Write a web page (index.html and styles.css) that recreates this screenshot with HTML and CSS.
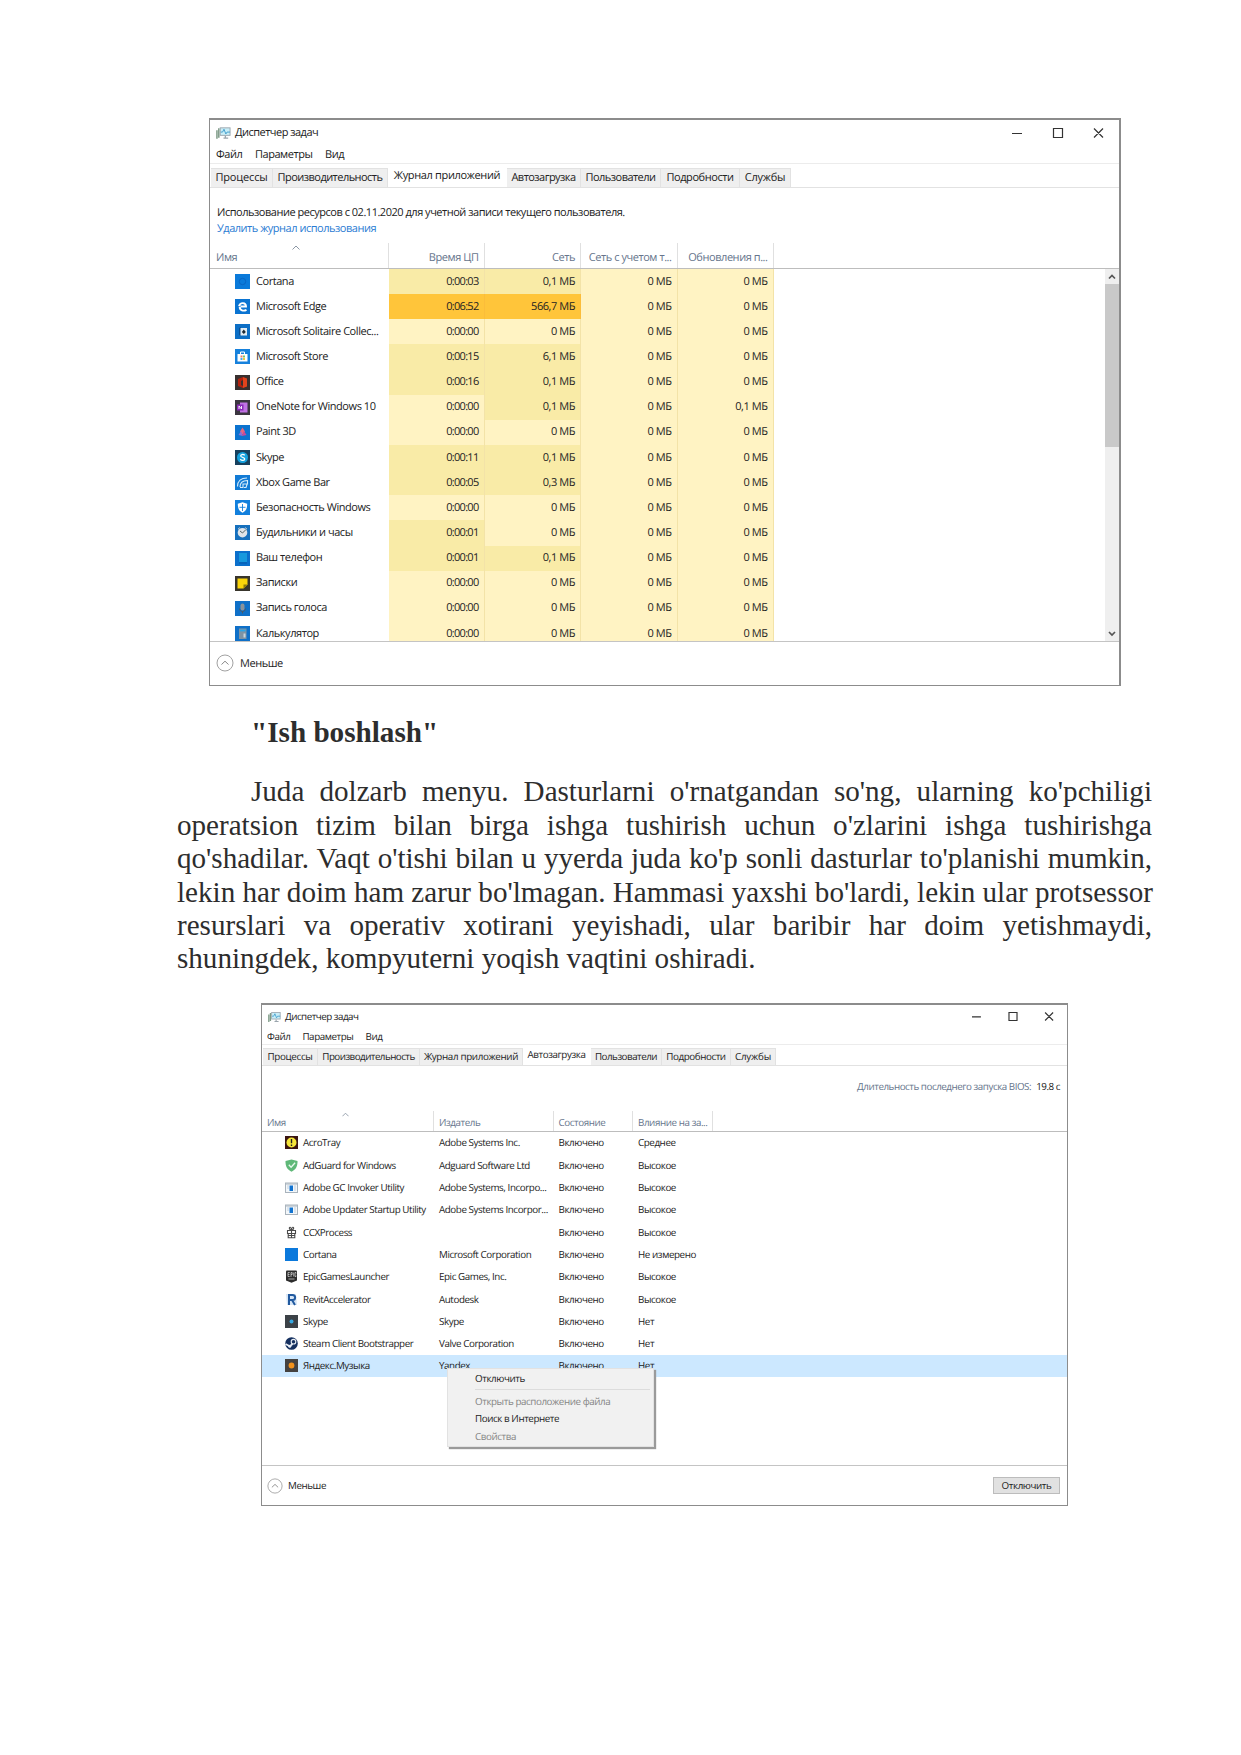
FILE: index.html
```html
<!DOCTYPE html>
<html lang="uz">
<head>
<meta charset="utf-8">
<title>Ish boshlash</title>
<link rel="stylesheet" href="styles.css">
</head>
<body>
<main class="page">

<section class="window history">
  <header class="titlebar">
    <svg class="app-icon" viewBox="0 0 16 14"><path d="M1 4v9M3 2v10" stroke="#7d9a86" stroke-width="1.6"/><rect x="4.5" y="1.5" width="10.5" height="8" fill="#c9eef8" stroke="#9aa5ad"/><path d="M5 6h2l1.5-3 2 5 1.3-2H15" fill="none" stroke="#3f9ccb"/><path d="M8 12.5h5M10 10v2" stroke="#9aa5ad" stroke-width="1.4"/></svg>
    <span class="title">Диспетчер задач</span>
    <svg class="controls" viewBox="0 0 92 12"><path d="M0 6.500h10M41.500 1.500h9v9h-9zM82 1.500l9 9M91 1.500l-9 9" fill="none" stroke="#333" stroke-width="1.2"/></svg>
  </header>
  <nav class="menubar"><span>Файл</span><span>Параметры</span><span>Вид</span></nav>
  <div class="tabs"><span>Процессы</span><span>Производительность</span><span class="active">Журнал приложений</span><span>Автозагрузка</span><span>Пользователи</span><span>Подробности</span><span>Службы</span></div>
  <div class="usage"><p>Использование ресурсов с 02.11.2020 для учетной записи текущего пользователя.</p><p><a>Удалить журнал использования</a></p></div>
  <div class="row head"><span class="name">Имя<svg class="caret" viewBox="0 0 8 5"><path d="M.5 4.500L4 1l3.500 3.500" fill="none" stroke="#8b97a5"/></svg></span><span>Время ЦП</span><span>Сеть</span><span>Сеть с учетом т...</span><span>Обновления п...</span></div>
  <div class="list">
    <div class="rows">
      <div class="row"><span class="name"><svg viewBox="0 0 15 15"><rect width="15" height="15" fill="#0a7ada"/><circle cx="7.5" cy="7.5" r="3.2" fill="none" stroke="#0866c4"/></svg><b>Cortana</b></span><span class="mid">0:00:03</span><span class="mid">0,1 МБ</span><span>0 МБ</span><span>0 МБ</span></div>
      <div class="row"><span class="name"><svg viewBox="0 0 15 15"><rect width="15" height="15" fill="#0a74d2"/><path d="M11.500 10.800C8.500 12.500 4.700 11.500 4.700 8M4 7.200C5 3 11 3 11 7.500H5.500" fill="none" stroke="#fff" stroke-width="1.9"/></svg><b>Microsoft Edge</b></span><span class="hot">0:06:52</span><span class="hot">566,7 МБ</span><span>0 МБ</span><span>0 МБ</span></div>
      <div class="row"><span class="name"><svg viewBox="0 0 15 15"><rect width="15" height="15" fill="#0c6fc6"/><path d="M4 4l2-1v9l-2-1z" fill="#0a4f94"/><rect x="5.5" y="4" width="6.5" height="7.5" fill="#e4edf2"/><path d="M8.800 5.500l2 2.500-2 2-2-2z" fill="#1d2b36"/></svg><b>Microsoft Solitaire Collec...</b></span><span>0:00:00</span><span>0 МБ</span><span>0 МБ</span><span>0 МБ</span></div>
      <div class="row"><span class="name"><svg viewBox="0 0 15 15"><rect width="15" height="15" fill="#1681dc"/><path d="M5.500 5V3h4v2" fill="none" stroke="#fff"/><rect x="2.5" y="5" width="10" height="7.5" fill="#fff"/><path d="M5.500 6.500h2v2h-2z" fill="#ef7d6c"/><path d="M8 6.500h2v2H8z" fill="#7cc46b"/><path d="M5.500 9h2v2h-2z" fill="#4ba8ea"/><path d="M8 9h2v2H8z" fill="#f0c53c"/></svg><b>Microsoft Store</b></span><span class="mid">0:00:15</span><span class="mid">6,1 МБ</span><span>0 МБ</span><span>0 МБ</span></div>
      <div class="row"><span class="name"><svg viewBox="0 0 15 15"><rect width="15" height="15" fill="#38302f"/><path d="M3 4l5-2v3L6 6v4l2 1v2l-5-2z" fill="#b3220e"/><path d="M8 2l4 1.500v8L8 13z" fill="#e2431c"/></svg><b>Office</b></span><span class="mid">0:00:16</span><span class="mid">0,1 МБ</span><span>0 МБ</span><span>0 МБ</span></div>
      <div class="row"><span class="name"><svg viewBox="0 0 15 15"><rect width="15" height="15" fill="#3b3640"/><rect x="5" y="2.5" width="7.5" height="10" fill="#c172e4"/><rect x="2" y="4.5" width="6.5" height="6" fill="#8a2bb8"/><path d="M4 9V6l2.500 3V6" fill="none" stroke="#fff" stroke-width=".9"/></svg><b>OneNote for Windows 10</b></span><span>0:00:00</span><span class="mid">0,1 МБ</span><span>0 МБ</span><span>0,1 МБ</span></div>
      <div class="row"><span class="name"><svg viewBox="0 0 15 15"><rect width="15" height="15" fill="#0c73cf"/><path d="M7.500 2.500l2.500 4-2.500 3-2.500-3z" fill="#e8657c"/><path d="M3.500 10L6 6l2 5z" fill="#8c6fd8"/><path d="M11.500 10L9 6l-2 5z" fill="#c64a9a"/></svg><b>Paint 3D</b></span><span>0:00:00</span><span>0 МБ</span><span>0 МБ</span><span>0 МБ</span></div>
      <div class="row"><span class="name"><svg viewBox="0 0 15 15"><rect width="15" height="15" fill="#17415e"/><circle cx="7.5" cy="7.5" r="5.5" fill="#15a2df"/><path d="M9.800 5.300C8 3.800 5.500 4.500 5.700 6c.2 1.600 4 1.200 4 3 0 1.700-3 1.800-4.500.3" fill="none" stroke="#fff" stroke-width="1.3"/></svg><b>Skype</b></span><span class="mid">0:00:11</span><span class="mid">0,1 МБ</span><span>0 МБ</span><span>0 МБ</span></div>
      <div class="row"><span class="name"><svg viewBox="0 0 15 15"><rect width="15" height="15" fill="#127bd5"/><path d="M2.500 11.500C2.500 6 6 3 12 3M5 12c0-4 2-6.500 7.500-6.500V9H8v3.500H5M9 12.500h2l1-3" fill="none" stroke="#d6ecfb" stroke-width="1.1"/></svg><b>Xbox Game Bar</b></span><span class="mid">0:00:05</span><span class="mid">0,3 МБ</span><span>0 МБ</span><span>0 МБ</span></div>
      <div class="row"><span class="name"><svg viewBox="0 0 15 15"><rect width="15" height="15" fill="#1280dd"/><path d="M7.500 2.300l4.700 1.500c0 4.500-1 7-4.700 9-3.700-2-4.700-4.500-4.700-9z" fill="#fff"/><path d="M7.500 4v7M4.500 7.300h6" stroke="#1280dd" stroke-width=".9"/></svg><b>Безопасность Windows</b></span><span>0:00:00</span><span>0 МБ</span><span>0 МБ</span><span>0 МБ</span></div>
      <div class="row"><span class="name"><svg viewBox="0 0 15 15"><rect width="15" height="15" fill="#1670bd"/><circle cx="7.5" cy="7.7" r="4.8" fill="#dfe4e8"/><path d="M5 6l2.500 2L11 4.500" fill="none" stroke="#566"/><path d="M3 4l2-1.500M12 4l-2-1.500" stroke="#b9c6d0"/></svg><b>Будильники и часы</b></span><span class="mid">0:00:01</span><span>0 МБ</span><span>0 МБ</span><span>0 МБ</span></div>
      <div class="row"><span class="name"><svg viewBox="0 0 15 15"><rect width="15" height="15" fill="#0b70cc"/><rect x="4" y="2" width="8" height="9" fill="#1799dd"/><path d="M4 12h8" stroke="#075aa9"/></svg><b>Ваш телефон</b></span><span class="mid">0:00:01</span><span class="mid">0,1 МБ</span><span>0 МБ</span><span>0 МБ</span></div>
      <div class="row"><span class="name"><svg viewBox="0 0 15 15"><rect width="15" height="15" fill="#38352c"/><path d="M2.500 2.500h10v6l-4 4h-6z" fill="#fbd50a"/><path d="M8.500 12.500v-4h4z" fill="#8f7a08"/></svg><b>Записки</b></span><span>0:00:00</span><span>0 МБ</span><span>0 МБ</span><span>0 МБ</span></div>
      <div class="row"><span class="name"><svg viewBox="0 0 15 15"><rect width="15" height="15" fill="#0f70c8"/><rect x="5.5" y="2.5" width="4" height="7" rx="2" fill="#8a939b"/><path d="M4.500 7.500c0 4 6 4 6 0M7.500 10.500v2" fill="none" stroke="#4c5a66"/></svg><b>Запись голоса</b></span><span>0:00:00</span><span>0 МБ</span><span>0 МБ</span><span>0 МБ</span></div>
      <div class="row"><span class="name"><svg viewBox="0 0 15 15"><rect width="15" height="15" fill="#0f70c8"/><rect x="4" y="2.5" width="7.5" height="10.5" fill="#7f93a3"/><path d="M5 4.500h5.500" stroke="#2ba5e6" stroke-width="1.8"/><path d="M8.500 7.500h2v4h-2z" fill="#c8d4dc"/></svg><b>Калькулятор</b></span><span>0:00:00</span><span>0 МБ</span><span>0 МБ</span><span>0 МБ</span></div>
    </div>
    <div class="scrollbar">
      <svg viewBox="0 0 14 15"><path d="M4 9.500l3-3 3 3" fill="none" stroke="#555" stroke-width="1.7"/></svg>
      <i class="thumb"></i>
      <svg viewBox="0 0 14 15"><path d="M4 6l3 3 3-3" fill="none" stroke="#555" stroke-width="1.7"/></svg>
    </div>
  </div>
  <footer class="footer"><svg class="less" viewBox="0 0 18 18"><circle cx="9" cy="9" r="8" fill="none" stroke="#a2a2a2"/><path d="M5.500 10.500L9 7.200l3.500 3.300" fill="none" stroke="#8a8a8a"/></svg><span>Меньше</span></footer>
</section>

<article class="text">
  <h2>"Ish boshlash"</h2>
  <p>
    <span class="line first">Juda dolzarb menyu. Dasturlarni o'rnatgandan so'ng, ularning ko'pchiligi</span>
    <span class="line">operatsion tizim bilan birga ishga tushirish uchun o'zlarini ishga tushirishga</span>
    <span class="line">qo'shadilar. Vaqt o'tishi bilan u yyerda juda ko'p sonli dasturlar to'planishi mumkin,</span>
    <span class="line">lekin har doim ham zarur bo'lmagan. Hammasi yaxshi bo'lardi, lekin ular protsessor</span>
    <span class="line">resurslari va operativ xotirani yeyishadi, ular baribir har doim yetishmaydi,</span>
    <span class="line last">shuningdek, kompyuterni yoqish vaqtini oshiradi.</span>
  </p>
</article>

<section class="window startup">
  <header class="titlebar">
    <svg class="app-icon" viewBox="0 0 16 14"><path d="M1 4v9M3 2v10" stroke="#7d9a86" stroke-width="1.6"/><rect x="4.5" y="1.5" width="10.5" height="8" fill="#c9eef8" stroke="#9aa5ad"/><path d="M5 6h2l1.5-3 2 5 1.3-2H15" fill="none" stroke="#3f9ccb"/><path d="M8 12.5h5M10 10v2" stroke="#9aa5ad" stroke-width="1.4"/></svg>
    <span class="title">Диспетчер задач</span>
    <svg class="controls" viewBox="0 0 92 12"><path d="M0 6.500h10M41.500 1.500h9v9h-9zM82 1.500l9 9M91 1.500l-9 9" fill="none" stroke="#333" stroke-width="1.3"/></svg>
  </header>
  <nav class="menubar"><span>Файл</span><span>Параметры</span><span>Вид</span></nav>
  <div class="tabs"><span>Процессы</span><span>Производительность</span><span>Журнал приложений</span><span class="active">Автозагрузка</span><span>Пользователи</span><span>Подробности</span><span>Службы</span></div>
  <div class="bios"><span>Длительность последнего запуска BIOS:</span><b>19.8 с</b></div>
  <div class="row head"><span class="name">Имя<svg class="caret" viewBox="0 0 8 5"><path d="M.5 4.500L4 1l3.500 3.500" fill="none" stroke="#8b97a5"/></svg></span><span>Издатель</span><span>Состояние</span><span>Влияние на за...</span></div>
  <div class="list">
    <div class="rows">
      <div class="row"><span class="name"><svg viewBox="0 0 13 13"><rect width="13" height="13" fill="#3a1512"/><circle cx="6.5" cy="6.5" r="5" fill="#f6e63a"/><path d="M6.500 3v4.300M6.500 8.500v1.500" stroke="#222" stroke-width="1.4"/></svg><b>AcroTray</b></span><span>Adobe Systems Inc.</span><span>Включено</span><span>Среднее</span></div>
      <div class="row"><span class="name"><svg viewBox="0 0 13 13"><path d="M6.500.5l6 1.500c.2 5-1.500 8.500-6 10.700C2 10.500.3 7 .5 2z" fill="#5fb878"/><path d="M3.800 5.800l2.300 2.500 4-4.500" fill="none" stroke="#e9f8ee" stroke-width="1.3"/></svg><b>AdGuard for Windows</b></span><span>Adguard Software Ltd</span><span>Включено</span><span>Высокое</span></div>
      <div class="row"><span class="name"><svg viewBox="0 0 13 13"><rect x=".5" y="2" width="12" height="9.5" fill="#f3f7fa" stroke="#a9b3bc"/><path d="M1 3h11" stroke="#a9b3bc"/><path d="M4.500 4.500h3.500v5.500H4.500z" fill="#1273d0"/><path d="M2 5h2M2 7h2M9 5h2M9 7h2M9 9h2" stroke="#b5c7d6" stroke-width=".8"/></svg><b>Adobe GC Invoker Utility</b></span><span>Adobe Systems, Incorpo...</span><span>Включено</span><span>Высокое</span></div>
      <div class="row"><span class="name"><svg viewBox="0 0 13 13"><rect x=".5" y="2" width="12" height="9.5" fill="#f3f7fa" stroke="#a9b3bc"/><path d="M1 3h11" stroke="#a9b3bc"/><path d="M4.500 4.500h3.500v5.500H4.500z" fill="#1273d0"/><path d="M2 5h2M2 7h2M9 5h2M9 7h2M9 9h2" stroke="#b5c7d6" stroke-width=".8"/></svg><b>Adobe Updater Startup Utility</b></span><span>Adobe Systems Incorpor...</span><span>Включено</span><span>Высокое</span></div>
      <div class="row"><span class="name"><svg viewBox="0 0 13 13"><path d="M2.500 4.500h8v3h-8zM3.200 7.500h6.600v4.300H3.200zM6.500 4.500v7M3.200 9.500h6.600M6.500 4C4 4 3.800 1 5.200 1.300 6.200 1.500 6.500 4 6.500 4s.3-2.500 1.300-2.700C9.200 1 9 4 6.500 4" fill="none" stroke="#4a4a4a" stroke-width="1.1"/></svg><b>CCXProcess</b></span><span></span><span>Включено</span><span>Высокое</span></div>
      <div class="row"><span class="name"><svg viewBox="0 0 13 13"><rect width="13" height="13" fill="#0b79dc"/></svg><b>Cortana</b></span><span>Microsoft Corporation</span><span>Включено</span><span>Не измерено</span></div>
      <div class="row"><span class="name"><svg viewBox="0 0 13 13"><path d="M1 1.500Q1 .5 2 .5h9q1 0 1 1v9l-5.500 2.200L1 10.500z" fill="#2c2c2c"/><path d="M3 6.500V2.500h1.700M3 4.500h1.500M3 6.500h1.700M6 7V2.500h1.200v2H6M8.700 2.500v4M11 3.500v-1h-1v4h1v-1M3.500 9h6" fill="none" stroke="#ddd" stroke-width=".7"/></svg><b>EpicGamesLauncher</b></span><span>Epic Games, Inc.</span><span>Включено</span><span>Высокое</span></div>
      <div class="row"><span class="name"><svg viewBox="0 0 13 13"><path d="M1 1h10l1 11H2z" fill="#d7e6f6"/><path d="M4 12V2h3.500c3.500 0 3.500 5 0 5H4M7 7l3 5" fill="none" stroke="#225a9f" stroke-width="2"/></svg><b>RevitAccelerator</b></span><span>Autodesk</span><span>Включено</span><span>Высокое</span></div>
      <div class="row"><span class="name"><svg viewBox="0 0 13 13"><rect width="13" height="13" fill="#3c4247"/><circle cx="6.5" cy="6.5" r="2" fill="#35a8e2"/></svg><b>Skype</b></span><span>Skype</span><span>Включено</span><span>Нет</span></div>
      <div class="row"><span class="name"><svg viewBox="0 0 13 13"><circle cx="6.5" cy="6.5" r="6.3" fill="#15305f"/><circle cx="8.5" cy="4.7" r="2.3" fill="#15305f" stroke="#e8eef5" stroke-width="1.1"/><path d="M.5 7l4.300 2.200L7.500 7" fill="none" stroke="#e8eef5" stroke-width="1.8"/><circle cx="4.8" cy="9.3" r="1.5" fill="#e8eef5"/></svg><b>Steam Client Bootstrapper</b></span><span>Valve Corporation</span><span>Включено</span><span>Нет</span></div>
      <div class="row selected"><span class="name"><svg viewBox="0 0 13 13"><rect width="13" height="13" fill="#454240"/><circle cx="6.5" cy="6.5" r="2.9" fill="#f2921c"/></svg><b>Яндекс.Музыка</b></span><span>Yandex</span><span>Включено</span><span>Нет</span></div>
    </div>
    <div class="context"><span>Отключить</span><hr><span class="off">Открыть расположение файла</span><span>Поиск в Интернете</span><span class="off">Свойства</span></div>
  </div>
  <footer class="footer"><svg class="less" viewBox="0 0 18 18"><circle cx="9" cy="9" r="8" fill="none" stroke="#a2a2a2"/><path d="M5.500 10.500L9 7.200l3.500 3.300" fill="none" stroke="#8a8a8a"/></svg><span>Меньше</span><button>Отключить</button></footer>
</section>
</main>
</body>
</html>
```
FILE: styles.css
```css
* { box-sizing: border-box; }
body { margin: 0; background: #fff; }
.page { width: 1241px; height: 1755px; padding-top: 118px; overflow: hidden; }

.window {
  display: flex;
  flex-direction: column;
  border: solid #8c8c8c;
  border-width: 2px 2px 1px 1px;
  background: #fff;
  color: #222;
  font-family: "Open Sans", "Noto Sans", sans-serif;
  text-rendering: geometricPrecision;
  white-space: nowrap;
}
.window b { font-weight: inherit; }
.window svg { display: block; flex: none; }
.titlebar, .menubar, .footer { display: flex; align-items: center; flex: none; }
.controls { margin-left: auto; }
.menubar { border-bottom: 1px solid #ececec; }
.tabs { display: flex; align-items: flex-end; flex: none; border-bottom: 1px solid #e2e2e2; }
.tabs span {
  background: #efefef;
  border: 1px solid #e2e2e2;
  border-width: 1px 1px 0 0;
  text-align: center;
}
.tabs .active { background: #fff; border-color: transparent; align-self: stretch; }
.row { display: grid; align-items: stretch; }
.row > span { display: flex; align-items: center; }
.head { flex: none; color: #66758c; border-bottom: 1px solid #bdbdbd; }
.head > span { border-right: 1px solid #e0e0e0; }
.head .name { position: relative; }
.caret { position: absolute; top: 0; }
.list { position: relative; flex: 1; min-height: 0; overflow: hidden; border-bottom: 1px solid #c4c4c4; }

/* App history window */
.history { width: 912px; height: 568px; margin-left: 209px; font-size: 11px; letter-spacing: -.44px; }
.history .titlebar { height: 26px; padding: 0 16px 1px 6px; letter-spacing: -.52px; }
.history .app-icon { width: 15px; height: 14px; margin-right: 4px; }
.history .controls { width: 92px; height: 12px; margin-right: -1px; }
.history .menubar { height: 18px; padding-left: 6px; gap: 12.500px; }
.history .tabs { height: 24px; padding-left: 1px; }
.history .tabs span { height: 19px; line-height: 17px; }
.history .tabs .active { height: auto; line-height: 21px; letter-spacing: -.35px; }
.history .tabs span:nth-child(1) { width: 62px; letter-spacing: -.15px; }
.history .tabs span:nth-child(2) { width: 115px; letter-spacing: -.54px; }
.history .tabs span:nth-child(3) { width: 119px; }
.history .tabs span:nth-child(4) { width: 74px; letter-spacing: -.54px; }
.history .tabs span:nth-child(5) { width: 80px; letter-spacing: -.54px; }
.history .tabs span:nth-child(6) { width: 79px; }
.history .tabs span:nth-child(7) { width: 51px; letter-spacing: -.2px; }
.usage { height: 55px; padding: 17px 0 0 7px; letter-spacing: -.48px; }
.usage p { margin: 0; line-height: 15.500px; }
.usage a { color: #2b7cd3; }
.history .row { grid-template-columns: 178.500px 96px 96.500px 96.500px 96px; height: 25.150px; }
.history .row > span { justify-content: flex-end; padding: 0 5px 1px 0; }
.history .row > .name { justify-content: flex-start; padding: 0 0 0 25px; gap: 6px; }
.history .row b { padding-bottom: 1px; }
.history .row svg { width: 15px; height: 15px; }
.history .head { height: 26px; }
.history .head > span { padding-top: 4px; }
.history .head > .name { padding: 4px 0 0 6px; }
.history .head .caret { width: 8px; height: 5px; left: 82px; top: 2px; }
.history .list { display: flex; justify-content: space-between; }
.history .list .row > span:not(.name) { background: #fff3c3; border-right: 1px solid #f3e3a8; }
.history .list .row > span:nth-child(2) { letter-spacing: -.7px; }
.history .list .row > span.mid { background: #f9eba7; }
.history .list .row > span.hot { background: #ffc53a; border-color: #fbbd3a; }
.scrollbar { display: flex; flex-direction: column; justify-content: space-between; width: 14px; background: #efefef; }
.scrollbar svg { width: 14px; height: 15px; }
.thumb { height: 163px; margin-bottom: auto; background: #c9c9c9; }
.history .footer { height: 43px; padding: 0 0 1px 6px; gap: 6px; }
.history .less { width: 18px; height: 18px; }

/* Body text */
.text { width: 975px; margin-left: 177px; color: #2d2d2d; font: 29.100px/33.400px "Liberation Serif", serif; }
.text h2 { margin: 30px 0 26px; padding-left: 74px; font-size: 29.170px; font-weight: 700; }
.text p { margin: 0; }
.line { display: block; text-align: justify; text-align-last: justify; white-space: nowrap; }
.first { padding-left: 74px; }
.last { text-align-last: left; }

/* Startup window */
.startup { width: 807px; height: 503px; margin: 27px 0 0 261px; font-size: 9.800px; letter-spacing: -.42px; border-right-width: 1px; }
.startup .titlebar { height: 24px; padding: 0 13px 0 6px; letter-spacing: -.5px; }
.startup .app-icon { width: 13px; height: 12px; margin-right: 4px; }
.startup .controls { width: 82px; height: 11px; }
.startup .menubar { height: 16px; padding-left: 5px; gap: 12px; }
.startup .tabs { height: 21px; padding-left: 1px; }
.startup .tabs span { height: 17px; line-height: 15px; }
.startup .tabs .active { height: auto; line-height: 18px; }
.startup .tabs span:nth-child(1) { width: 55px; letter-spacing: -.3px; }
.startup .tabs span:nth-child(2) { width: 102px; letter-spacing: -.54px; }
.startup .tabs span:nth-child(3) { width: 103px; letter-spacing: -.35px; }
.startup .tabs span:nth-child(4) { width: 68px; }
.startup .tabs span:nth-child(5) { width: 71px; letter-spacing: -.5px; }
.startup .tabs span:nth-child(6) { width: 69px; }
.startup .tabs span:nth-child(7) { width: 45px; letter-spacing: -.2px; }
.bios { display: flex; justify-content: flex-end; gap: 5px; height: 45px; padding: 14px 7px 0 0; color: #66758c; letter-spacing: -.46px; }
.bios b { color: #222; }
.startup .row { grid-template-columns: 172px 119.500px 79.500px 79.500px; height: 22.300px; }
.startup .row > span { padding-left: 5px; }
.startup .row > .name { padding-left: 23px; gap: 5px; }
.startup .row svg { width: 13px; height: 13px; }
.startup .head { height: 21px; }
.startup .head > span { padding-top: 4px; }
.startup .head > .name { padding-left: 5px; }
.startup .head .caret { width: 7px; height: 5px; left: 80px; top: 1px; }
.selected { background: #cce8ff; }
.context {
  position: absolute;
  left: 185px;
  top: 236px;
  width: 207px;
  height: 79px;
  padding: 1px 3px 0 27px;
  background: #f1f1f1;
  border: 1px solid #e2e2e2;
  box-shadow: 2px 2px 1px #9a9a9a;
}
.context span { display: block; height: 17.500px; line-height: 17.500px; }
.context hr { margin: 2px 0 2.500px; border: 0; border-top: 1px solid #dcdcdc; }
.context .off { color: #858585; }
.startup .footer { height: 39px; padding: 1px 7px 0 5px; gap: 5px; }
.startup .less { width: 16px; height: 16px; }
.startup button {
  width: 67px;
  height: 17px;
  margin-left: auto;
  padding: 0;
  border: 1px solid #bcbcbc;
  background: #e1e1e1;
  color: #222;
  font: inherit;
  letter-spacing: inherit;
  line-height: 14px;
}
```
